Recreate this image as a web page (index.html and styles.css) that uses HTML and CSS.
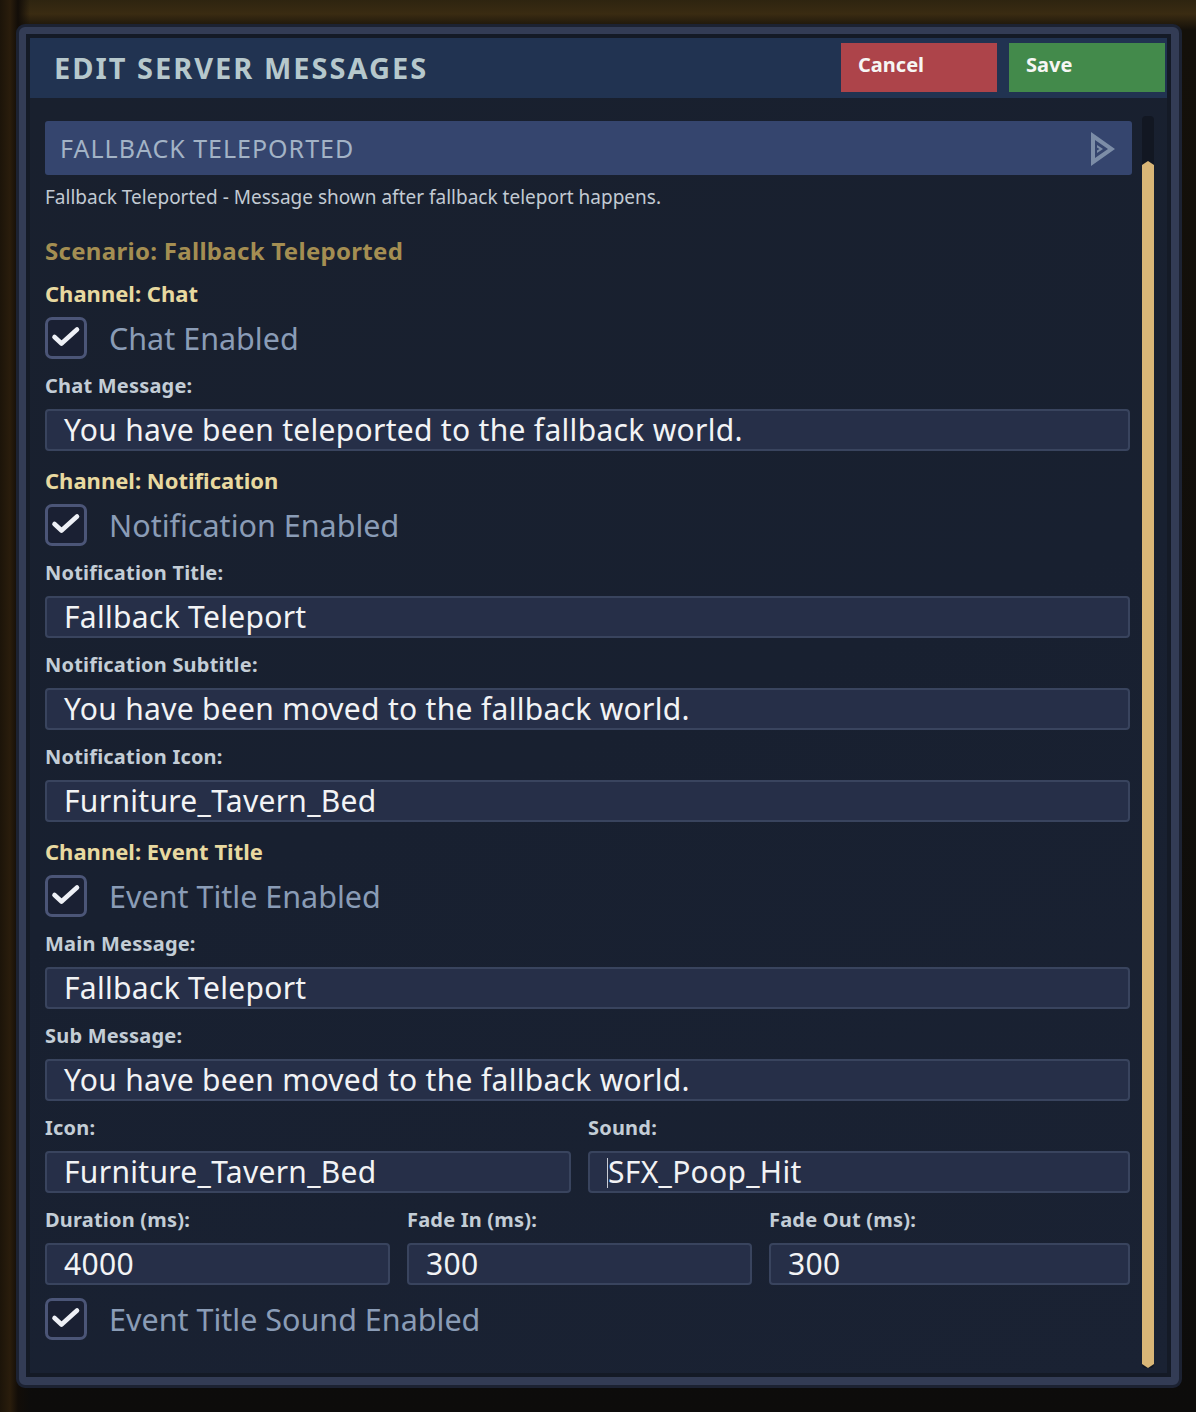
FILE: index.html
```html
<!DOCTYPE html>
<html lang="en">
<head>
<meta charset="utf-8">
<title>Edit Server Messages</title>
<link rel="stylesheet" href="styles.css">
</head>
<body>
<div class="scene">
  <div class="frame">
    <div class="inner">
      <header class="header">
        <h1 class="title">EDIT SERVER MESSAGES</h1>
        <div class="actions">
          <button class="btn btn-cancel">Cancel</button>
          <button class="btn btn-save">Save</button>
        </div>
      </header>
      <div class="body">
        <div class="content">
          <div class="dropdown">
            <span class="dropdown-text">FALLBACK TELEPORTED</span>
            <svg class="dropdown-icon" width="26" height="36" viewBox="0 0 26 36">
              <path fill="#7c8da7" fill-rule="evenodd" d="M1 1 L25 18 L1 35 Z M5 9 L5 27 L18 18 Z"/>
              <path fill="#7c8da7" d="M7 14 L13 18 L7 22 L7 19.5 L9.5 18 L7 16.5 Z"/>
            </svg>
          </div>
          <p class="desc">Fallback Teleported - Message shown after fallback teleport happens.</p>
          <h2 class="scenario">Scenario: Fallback Teleported</h2>

          <h3 class="channel channel-first">Channel: Chat</h3>
          <label class="check">
            <span class="box"><svg width="36" height="36" viewBox="0 0 36 36"><path d="M6.5 17 L13.5 23.5 L29 9.5" fill="none" stroke="#eef0f6" stroke-width="4.6" stroke-linecap="round" stroke-linejoin="round"/></svg></span>
            <span class="check-label">Chat Enabled</span>
          </label>
          <div class="field">
            <span class="label">Chat Message:</span>
            <div class="input">You have been teleported to the fallback world.</div>
          </div>

          <h3 class="channel">Channel: Notification</h3>
          <label class="check">
            <span class="box"><svg width="36" height="36" viewBox="0 0 36 36"><path d="M6.5 17 L13.5 23.5 L29 9.5" fill="none" stroke="#eef0f6" stroke-width="4.6" stroke-linecap="round" stroke-linejoin="round"/></svg></span>
            <span class="check-label">Notification Enabled</span>
          </label>
          <div class="field">
            <span class="label">Notification Title:</span>
            <div class="input">Fallback Teleport</div>
          </div>
          <div class="field">
            <span class="label">Notification Subtitle:</span>
            <div class="input">You have been moved to the fallback world.</div>
          </div>
          <div class="field">
            <span class="label">Notification Icon:</span>
            <div class="input">Furniture_Tavern_Bed</div>
          </div>

          <h3 class="channel">Channel: Event Title</h3>
          <label class="check">
            <span class="box"><svg width="36" height="36" viewBox="0 0 36 36"><path d="M6.5 17 L13.5 23.5 L29 9.5" fill="none" stroke="#eef0f6" stroke-width="4.6" stroke-linecap="round" stroke-linejoin="round"/></svg></span>
            <span class="check-label">Event Title Enabled</span>
          </label>
          <div class="field">
            <span class="label">Main Message:</span>
            <div class="input">Fallback Teleport</div>
          </div>
          <div class="field">
            <span class="label">Sub Message:</span>
            <div class="input">You have been moved to the fallback world.</div>
          </div>
          <div class="row row-2">
            <div class="field">
              <span class="label">Icon:</span>
              <div class="input">Furniture_Tavern_Bed</div>
            </div>
            <div class="field">
              <span class="label">Sound:</span>
              <div class="input input-focus"><span class="caret"></span>SFX_Poop_Hit</div>
            </div>
          </div>
          <div class="row row-3">
            <div class="field">
              <span class="label">Duration (ms):</span>
              <div class="input">4000</div>
            </div>
            <div class="field">
              <span class="label">Fade In (ms):</span>
              <div class="input">300</div>
            </div>
            <div class="field">
              <span class="label">Fade Out (ms):</span>
              <div class="input">300</div>
            </div>
          </div>
          <label class="check check-last">
            <span class="box"><svg width="36" height="36" viewBox="0 0 36 36"><path d="M6.5 17 L13.5 23.5 L29 9.5" fill="none" stroke="#eef0f6" stroke-width="4.6" stroke-linecap="round" stroke-linejoin="round"/></svg></span>
            <span class="check-label">Event Title Sound Enabled</span>
          </label>
        </div>
        <div class="scrollbar">
          <div class="thumb"></div>
        </div>
      </div>
    </div>
  </div>
</div>
</body>
</html>
```
FILE: styles.css
```css
* { box-sizing: border-box; }

html, body {
  margin: 0;
  padding: 0;
  height: 100%;
}

body {
  font-family: "Noto Sans", "Open Sans", sans-serif;
  background:
    linear-gradient(90deg, #1c1409 0px, #2a1d0c 10px, #120d08 18px, transparent 30px),
    linear-gradient(180deg, #2e2410 0px, #3a2b12 14px, #14100a 30px, #0d0c0b 100%);
  background-color: #0c0b0a;
  overflow: hidden;
}

.scene {
  padding: 24px 14px 0 16px;
}

.frame {
  width: 1166px;
  height: 1364px;
  border-radius: 9px;
  background: #333c55;
  border: 3px solid #1c2232;
  padding: 7px 8px 8px 7px;
}

.inner {
  height: 100%;
  border: 4px solid #141a26;
  background: #171e2b;
  display: flex;
  flex-direction: column;
}

.header {
  height: 60px;
  background: #213351;
  display: flex;
  align-items: flex-start;
  justify-content: space-between;
  padding: 0 2px 0 24px;
  flex: none;
}

.title {
  margin: 0;
  font-size: 29px;
  line-height: 60px;
  font-weight: 700;
  letter-spacing: 2px;
  color: #b6c8cc;
}

.actions {
  display: flex;
  gap: 12px;
  padding-top: 5px;
}

.btn {
  width: 156px;
  height: 49px;
  border: 0;
  padding: 0 0 6px 17px;
  text-align: left;
  font-family: inherit;
  font-size: 20px;
  font-weight: 700;
  color: #f6f6f4;
}

.btn-cancel { background: #ad444a; }
.btn-save { background: #438a4b; }

.body {
  flex: 1;
  display: flex;
  padding: 23px 13px 0 15px;
  gap: 10px;
  background: linear-gradient(160deg, #19202e 0%, #182030 50%, #1a2233 100%);
}

.content {
  flex: 1;
  display: flex;
  flex-direction: column;
  gap: 15px;
}

.dropdown {
  height: 54px;
  background: #35456e;
  border-radius: 3px;
  display: flex;
  align-items: center;
  justify-content: space-between;
  padding: 0 16px 0 15px;
}

.dropdown-text {
  font-size: 25px;
  letter-spacing: 1px;
  color: #a3b3c6;
}

.dropdown-icon {
  display: block;
  margin-top: 1px;
}

.desc {
  margin: -4px 0 0 0;
  font-size: 19px;
  line-height: 22px;
  color: #c2cad3;
}

.scenario {
  margin: 14px 0 0 0;
  font-size: 24px;
  line-height: 28px;
  font-weight: 700;
  letter-spacing: 0.3px;
  color: #a48e52;
}

.channel {
  margin: 2px 0 -3px 0;
  font-size: 22px;
  line-height: 24px;
  font-weight: 700;
  color: #e8d9a0;
}

.channel-first {
  margin-top: 1px;
}

.check {
  display: flex;
  align-items: center;
  gap: 22px;
  height: 42px;
}

.check-last {
  margin-top: -2px;
}

.box {
  width: 42px;
  height: 42px;
  border: 3px solid #4b5577;
  border-radius: 7px;
  background: #1a2033;
  display: flex;
  align-items: center;
  justify-content: center;
}

.box svg { display: block; }

.check-label {
  font-size: 30.5px;
  color: #8a9cb6;
}

.field {
  display: flex;
  flex-direction: column;
  gap: 11px;
}

.label {
  font-size: 20px;
  line-height: 24px;
  font-weight: 700;
  letter-spacing: 0.2px;
  color: #c3cdd6;
}

.input {
  height: 42px;
  margin-right: 2px;
  background: #262f48;
  border: 2px solid #39445e;
  border-radius: 4px;
  padding: 0 0 0 17px;
  font-size: 30px;
  letter-spacing: 0.3px;
  line-height: 37px;
  color: #f2f3f5;
  white-space: nowrap;
  overflow: hidden;
}

.caret {
  display: inline-block;
  width: 1px;
  height: 30px;
  background: #c8ccd4;
  vertical-align: -5px;
}

.row {
  display: grid;
  gap: 17px;
}

.row-2 { grid-template-columns: 526px 1fr; }
.row-3 { grid-template-columns: 345px 345px 1fr; }

.row .input { margin-right: 0; }
.row > .field:last-child .input { margin-right: 2px; }

.scrollbar {
  width: 12px;
  margin-top: -5px;
  margin-bottom: 5px;
  background: #121722;
  border-radius: 4px;
  position: relative;
  flex: none;
}

.thumb {
  position: absolute;
  left: 0;
  right: 0;
  top: 45px;
  bottom: 0;
  background: #d9b677;
  clip-path: polygon(0 4px, 50% 0, 100% 4px, 100% calc(100% - 4px), 50% 100%, 0 calc(100% - 4px));
}
```
